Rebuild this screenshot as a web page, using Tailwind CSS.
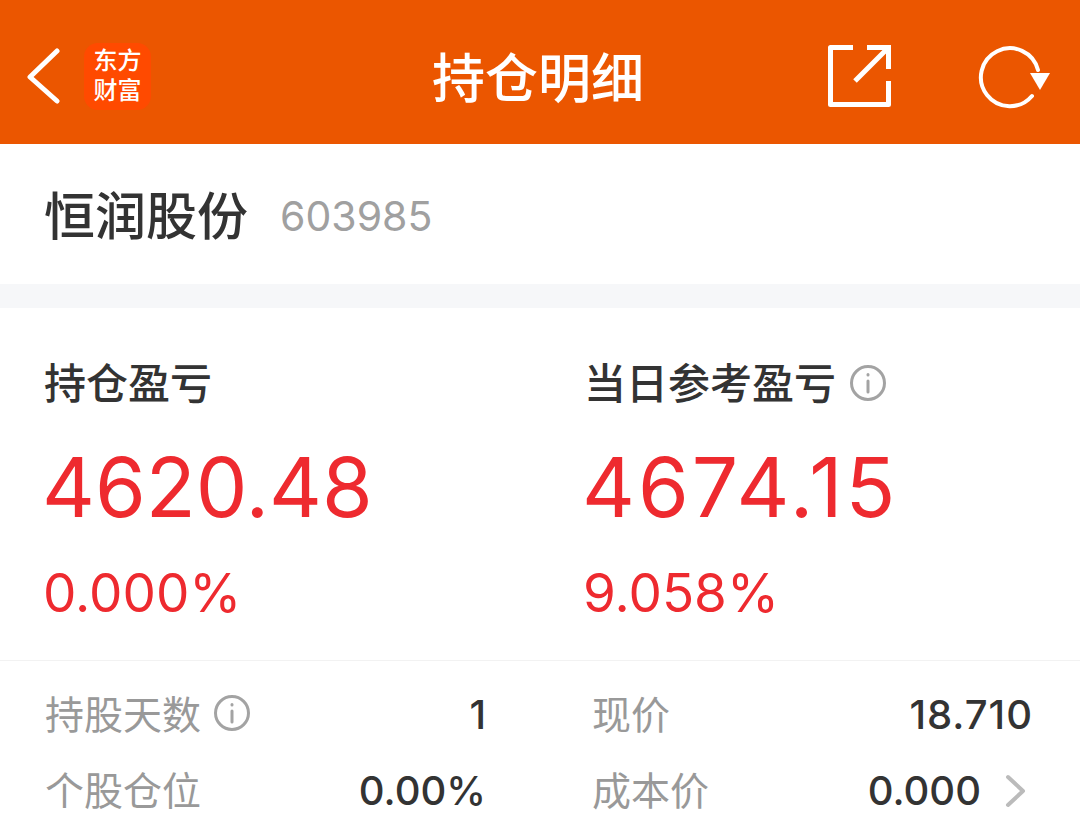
<!DOCTYPE html>
<html>
<head>
<meta charset="utf-8" />
<script src="https://cdn.jsdelivr.net/npm/@tailwindcss/browser@4"></script>
</head>
<body class="bg-white font-['Inter','Noto_Sans_CJK_SC',sans-serif] overflow-hidden">
  <div class="w-[1080px] h-[830px] overflow-hidden">
    <!-- header -->
    <div class="relative h-[144px] bg-[#eb5600] flex items-center justify-between pl-[26px] pr-[30px] pt-[8px]">
      <div class="flex items-center">
        <svg width="36" height="56" viewBox="0 0 36 56" fill="none" stroke="white" stroke-width="5" stroke-linecap="round" stroke-linejoin="round"><path d="M31 3 L4 29 L31 53"/></svg>
        <div class="ml-[22px] w-[67px] h-[67px] rounded-[14px] bg-[#ff4a00] flex flex-col items-center justify-center text-white text-[24px] leading-[30px] font-medium">
          <span>东方</span><span>财富</span>
        </div>
      </div>
      <div class="absolute left-[432px] top-[48px] text-white text-[53px] leading-[62px] font-medium">持仓明细</div>
      <div class="flex items-center gap-[86px]">
        <svg width="66" height="66" viewBox="0 0 66 66" fill="none" stroke="white" stroke-width="5"><path d="M27 4.500 H4.500 V61.500 H62.500 V38" stroke-linejoin="round"/><path d="M41 4.500 H62.500 V26 M62.500 4.500 L29 38"/></svg>
        <svg width="72" height="66" viewBox="0 0 72 66" fill="none"><path d="M54 53 A29 29 0 1 1 60 27" stroke="white" stroke-width="4" stroke-linecap="round"/><path d="M52 30 H72 L62 47 Z" fill="white"/></svg>
      </div>
    </div>

    <!-- stock name -->
    <div class="h-[140px] flex items-center pl-[44px] pt-[6px]">
      <span class="text-[51px] font-medium text-[#333333]">恒润股份</span>
      <span class="ml-[32px] text-[41px] text-[#a0a0a0]">603985</span>
    </div>
    <div class="h-[24px] bg-[#f6f7f9]"></div>

    <!-- profit -->
    <div class="h-[353px] border-b border-[#f2f2f2] grid grid-cols-[540px_1fr] pl-[44px] pt-[50px]">
      <div>
        <div class="text-[42px] leading-[52px] font-medium text-[#333333]">持仓盈亏</div>
        <div class="mt-[28px] -ml-[2px] text-[82px] leading-[100px] text-[#ee2a2f]">4620.48</div>
        <div class="mt-[23px] -ml-[1px] text-[53px] leading-[64px] text-[#ee2a2f]">0.000%</div>
      </div>
      <div>
        <div class="flex items-center">
          <span class="text-[42px] leading-[52px] font-medium text-[#333333]">当日参考盈亏</span>
          <svg class="ml-[13px] -mt-[3px]" width="38" height="38" viewBox="0 0 38 38" fill="none" stroke="#a3a3a3" stroke-width="3" stroke-linecap="round"><circle cx="19" cy="19" r="16.500"/><path d="M19 17 V28"/><path d="M19 10.500 V11"/></svg>
        </div>
        <div class="mt-[28px] -ml-[2px] text-[82px] leading-[100px] tracking-[3px] text-[#ee2a2f]">4674.15</div>
        <div class="mt-[23px] -ml-[1px] text-[53px] leading-[64px] text-[#ee2a2f]">9.058%</div>
      </div>
    </div>

    <!-- details -->
    <div class="grid grid-cols-[441px_441px] gap-x-[106px] gap-y-[26px] pl-[45px] pt-[29px]">
      <div class="flex items-center justify-between h-[50px]">
        <div class="flex items-center">
          <span class="text-[39px] text-[#999999]">持股天数</span>
          <svg class="ml-[12px] -mt-[4px]" width="38" height="38" viewBox="0 0 38 38" fill="none" stroke="#a3a3a3" stroke-width="3" stroke-linecap="round"><circle cx="19" cy="19" r="16.500"/><path d="M19 17 V28"/><path d="M19 10.500 V11"/></svg>
        </div>
        <span class="text-[40px] font-medium text-[#333333]">1</span>
      </div>
      <div class="flex items-center justify-between h-[50px]">
        <span class="text-[39px] text-[#999999]">现价</span>
        <span class="text-[40px] font-medium tracking-[1px] text-[#333333]">18.710</span>
      </div>
      <div class="flex items-center justify-between h-[50px]">
        <span class="text-[39px] text-[#999999]">个股仓位</span>
        <span class="text-[40px] font-medium text-[#333333]">0.00%</span>
      </div>
      <div class="flex items-center justify-between h-[50px]">
        <span class="text-[39px] text-[#999999]">成本价</span>
        <span class="flex items-center mr-[6px]">
          <span class="text-[40px] font-medium text-[#333333]">0.000</span>
          <svg class="ml-[24px]" width="22" height="34" viewBox="0 0 22 34" fill="none" stroke="#bbbbbb" stroke-width="4" stroke-linecap="round" stroke-linejoin="round"><path d="M3 3 L18 17 L3 31"/></svg>
        </span>
      </div>
    </div>
  </div>
</body>
</html>
